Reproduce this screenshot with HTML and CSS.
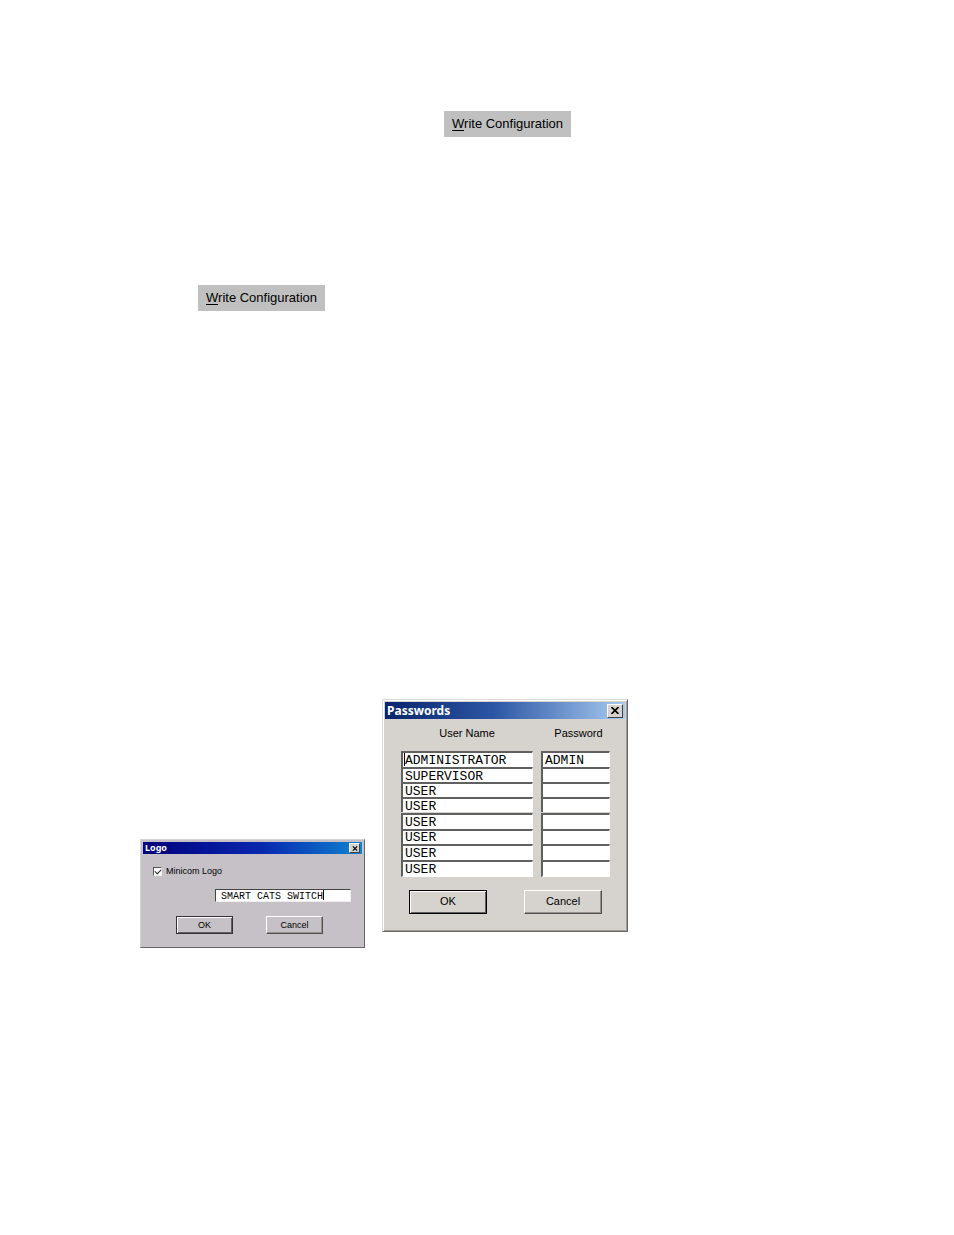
FILE: index.html
```
<!DOCTYPE html>
<html lang="en">
<head>
  <meta charset="UTF-8" />
  <title>Write Configuration</title>
  <meta name="viewport" content="width=device-width, initial-scale=1.0"/>
  <link rel="stylesheet" href="styles.css">
</head>
<body>

  <main class="page">
    <div class="step step-first">
      <button class="write-btn" type="button"><u>W</u>rite Configuration</button>
    </div>
    <div class="step step-second">
      <button class="write-btn" type="button"><u>W</u>rite Configuration</button>
    </div>

    <div class="dialogs">
      <form class="dialog logo">
        <header class="titlebar">
          <h2>Logo</h2>
          <button class="close" type="button" aria-label="Close">
            <svg viewBox="0 0 8 7"><path d="M1 0.5L7 6.5M7 0.5L1 6.5"/></svg>
          </button>
        </header>
        <div class="logo-body">
          <label class="check"><input type="checkbox" checked>Minicom Logo</label>
          <div class="logo-field">
            <input type="text" value="SMART CATS SWITCH" aria-label="Logo text">
            <span class="caret"></span>
          </div>
          <div class="actions">
            <button class="default" type="button">OK</button>
            <button type="button">Cancel</button>
          </div>
        </div>
      </form>

      <form class="dialog passwords">
        <header class="titlebar">
          <h2>Passwords</h2>
          <button class="close" type="button" aria-label="Close">
            <svg viewBox="0 0 8 7"><path d="M0.5 0L7.5 7M7.5 0L0.5 7"/></svg>
          </button>
        </header>
        <table>
          <thead>
            <tr><th id="user">User Name</th><th id="pass">Password</th></tr>
          </thead>
          <tbody>
            <tr>
              <td class="focused"><input type="text" value="ADMINISTRATOR" aria-labelledby="user"><span class="caret"></span></td>
              <td><input type="text" value="ADMIN" aria-labelledby="pass"></td>
            </tr>
            <tr>
              <td><input type="text" value="SUPERVISOR" aria-labelledby="user"></td>
              <td><input type="text" aria-labelledby="pass"></td>
            </tr>
            <tr>
              <td><input type="text" value="USER" aria-labelledby="user"></td>
              <td><input type="text" aria-labelledby="pass"></td>
            </tr>
            <tr>
              <td><input type="text" value="USER" aria-labelledby="user"></td>
              <td><input type="text" aria-labelledby="pass"></td>
            </tr>
            <tr>
              <td><input type="text" value="USER" aria-labelledby="user"></td>
              <td><input type="text" aria-labelledby="pass"></td>
            </tr>
            <tr>
              <td><input type="text" value="USER" aria-labelledby="user"></td>
              <td><input type="text" aria-labelledby="pass"></td>
            </tr>
            <tr>
              <td><input type="text" value="USER" aria-labelledby="user"></td>
              <td><input type="text" aria-labelledby="pass"></td>
            </tr>
            <tr>
              <td><input type="text" value="USER" aria-labelledby="user"></td>
              <td><input type="text" aria-labelledby="pass"></td>
            </tr>
          </tbody>
        </table>
        <div class="actions">
          <button class="default" type="button">OK</button>
          <button type="button">Cancel</button>
        </div>
      </form>
    </div>
  </main>

</body>
</html>
```
FILE: styles.css
```
* { margin: 0; padding: 0; box-sizing: border-box; }
body {
  background: #fff;
  color: #000;
  font-family: "Liberation Sans", Arial, sans-serif;
  font-size: 11px;
}
button, input {
  font: inherit;
  color: inherit;
  border-radius: 0;
}
.page {
  padding: 111px 20px 40px 140px;
}
.step-first { padding-left: 304px; }
.step-second {
  padding-left: 58px;
  margin-top: 148px;
}
.write-btn {
  display: block;
  padding: 0 8px 2px;
  height: 26px;
  border: none;
  background: #c0c0c0;
  font-size: 13px;
  white-space: nowrap;
}
.write-btn u { text-underline-offset: 2px; }

/* Dialogs */
.dialogs {
  display: flex;
  align-items: flex-start;
  gap: 17px;
  margin-top: 388px;
}
.dialog {
  border: 1px solid;
  padding: 2px;
}
.titlebar {
  display: flex;
  align-items: center;
  justify-content: space-between;
  padding: 0 2px;
  color: #fff;
}
.titlebar h2 {
  font-family: "Noto Sans", Tahoma, sans-serif;
  font-weight: bold;
  line-height: 1;
}
.close {
  display: flex;
  align-items: center;
  justify-content: center;
  background: #d6d3ce;
  border: 1px solid;
  border-color: #fff #404040 #404040 #fff;
}
.close svg {
  width: 8px;
  height: 7px;
  fill: none;
  stroke: #000;
  stroke-width: 1.6;
}
.actions { display: flex; }
.actions button {
  padding-bottom: 2px;
  background: transparent;
  border: 1px solid;
  border-color: #fff #505050 #505050 #fff;
  box-shadow: inset -1px -1px #95928d;
}
.actions .default {
  border-color: #000;
  box-shadow: inset 1px 1px #fff, inset -1px -1px #606060;
}
.caret {
  position: absolute;
  width: 1px;
  background: #000;
}

/* Passwords */
.passwords {
  width: 246px;
  background: #d6d3ce;
  border-color: #dedbd6 #696969 #696969 #dedbd6;
  box-shadow: inset 1px 1px #fff, inset -1px -1px #a09d98;
}
.passwords .titlebar {
  height: 17px;
  background: linear-gradient(to right, #08246b, #2c56a4 45%, #a6caf0);
}
.passwords h2 { font-size: 12px; }
.passwords .close {
  width: 16px;
  height: 14px;
}
.passwords table {
  width: 209px;
  margin-left: 16px;
  border-collapse: collapse;
}
.passwords th {
  height: 32px;
  padding-bottom: 4px;
  font-weight: normal;
}
.passwords th:first-child,
.passwords td:first-child {
  width: 140px;
  padding-right: 8px;
}
.passwords th:last-child { padding-left: 6px; }
.passwords tbody { height: 126px; }
.passwords td { position: relative; }
.passwords td input {
  display: block;
  width: 100%;
  height: 16px;
  padding: 1px 0 0 2px;
  border: 1px solid;
  border-width: 2px 1px 0 2px;
  border-color: #606060 #fff #fff #606060;
  background: #fff;
  font: 13px/13px "Liberation Mono", "Courier New", monospace;
}
.passwords tr:nth-child(even) td input,
.passwords tr:nth-child(3) td input { height: 15px; }
.passwords tbody tr:last-child td input {
  height: 17px;
  border-bottom-width: 1px;
}
.focused .caret {
  top: 2px;
  left: 3px;
  height: 13px;
}
.passwords .actions {
  gap: 37px;
  padding: 13px 0 15px 24px;
}
.passwords .actions button {
  width: 78px;
  height: 24px;
}

/* Logo */
.logo {
  width: 225px;
  margin-top: 140px;
  background: #c6c1c7;
  border-color: #d5d2d6 #66636a #66636a #d5d2d6;
  font-size: 9px;
}
.logo .titlebar {
  height: 12px;
  background: linear-gradient(to right, #00007b, #0828b0 55%, #1084d0);
}
.logo h2 {
  padding-bottom: 1px;
  font-size: 9px;
}
.logo .close {
  width: 11px;
  height: 10px;
}
.logo .close svg {
  width: 6px;
  height: 5px;
}
.logo-body { padding: 11px 11px 11px 10px; }
.check {
  display: flex;
  align-items: center;
  gap: 4px;
  height: 12px;
}
.check input {
  appearance: none;
  width: 9px;
  height: 9px;
  border: 1px solid;
  border-color: #555 #eee #eee #555;
  background: #fff;
}
.check input:checked::after {
  content: "";
  display: block;
  width: 5px;
  height: 3px;
  margin: 1px;
  border: solid #222;
  border-width: 0 0 1px 1px;
  transform: rotate(-45deg);
}
.logo-field {
  position: relative;
  margin: 12px 0 0 62px;
}
.logo-field input {
  display: block;
  width: 100%;
  height: 13px;
  padding: 2px 0 0 5px;
  border: 1px solid;
  border-color: #444 #eee #eee #444;
  background: #fff;
  font: 10px/10px "Liberation Mono", "Courier New", monospace;
}
.logo-field .caret {
  top: 1px;
  left: 108px;
  height: 10px;
}
.logo .actions {
  gap: 33px;
  padding: 14px 0 0 23px;
}
.logo .actions button {
  width: 57px;
  height: 18px;
  padding: 0;
}
.logo .actions .default {
  border-color: #333;
}
```
